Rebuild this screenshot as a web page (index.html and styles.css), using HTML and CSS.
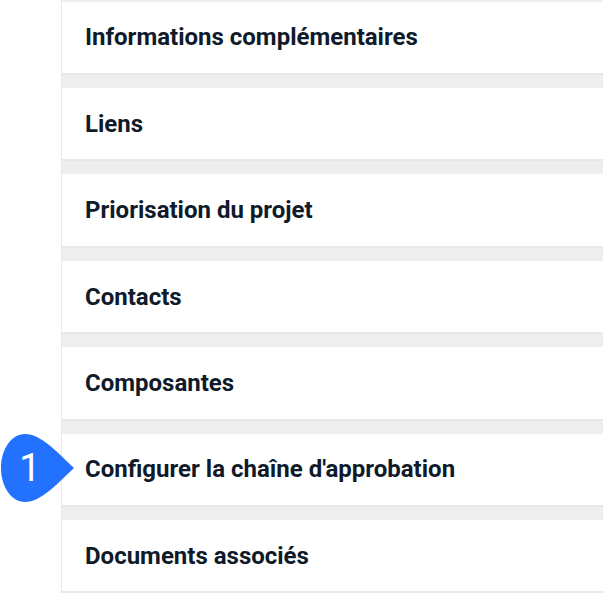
FILE: index.html

```html
<!DOCTYPE html>
<html lang="fr">
<head>
	<meta charset="UTF-8">
	<title>Projet</title>
	<link rel="stylesheet" href="styles.css">
</head>
<body>
	<div class="list_con">
		<div class="item">Informations complémentaires</div>
		<div class="item">Liens</div>
		<div class="item">Priorisation du projet</div>
		<div class="item">Contacts</div>
		<div class="item">Composantes</div>
		<div class="item">
			<div class="callout">
				<svg width="74" height="68" viewBox="0 0 74 68"><path d="M25 0C41 0 57 18 74 34C57 50 41 68 25 68C11 68 1 52 1 34C1 16 11 0 25 0Z" fill="#2272ff"/></svg>
				<span class="callout_num">1</span>
			</div>
			Configurer la chaîne d'approbation
		</div>
		<div class="item">Documents associés</div>
	</div>
</body>
</html>
```

FILE: styles.css

```css
*{
	margin:0;
	padding:0;
	box-sizing:border-box;
}

html,body{
	height:594px;
	overflow:hidden;
	background-color:#fff;
}

.list_con{
	margin-left:61px;
	padding-top:1.6px;
	display:flex;
	flex-direction:column;
	gap:13px;
	background-color:#eeeeee;
	border-left:1px solid #e8e8e8;
}

.item{
	height:73.4px;
	padding:0.4px 0 0 23px;
	display:flex;
	align-items:center;
	background-color:#fff;
	border-bottom:2px solid #e8e8e8;
	font-family:"Roboto",sans-serif;
	font-size:24px;
	font-weight:700;
	color:#0f1a2a;
}

.callout{
	position:absolute;
	left:0;
	top:434px;
	width:74px;
	height:68px;
}

.callout svg{
	display:block;
}

.callout_num{
	position:absolute;
	left:0;
	top:0;
	width:60px;
	line-height:68px;
	text-align:center;
	font-family:"Roboto",sans-serif;
	font-size:38px;
	font-weight:400;
	color:#fff;
}
```
